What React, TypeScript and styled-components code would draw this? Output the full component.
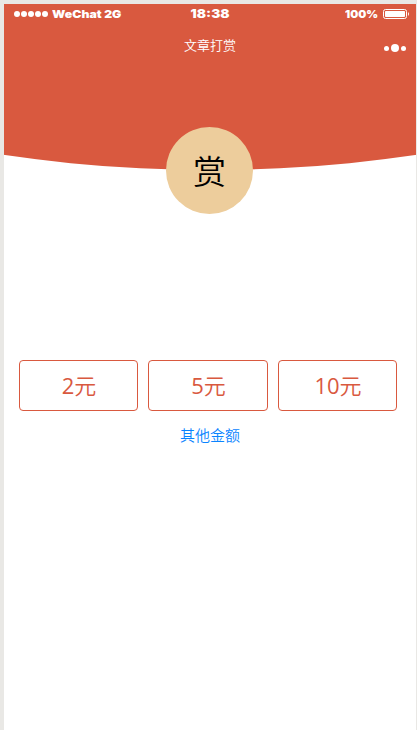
import React from "react";
import styled, { createGlobalStyle } from "styled-components";

const RED = "#d9593f";

const GlobalStyle = createGlobalStyle`
  * { box-sizing: border-box; }
  html, body, #root { height: 100%; }
  body {
    margin: 0;
    overflow: hidden;
    background: #e9e8e5;
    font-family: "Noto Sans CJK SC", sans-serif;
  }
`;

const Frame = styled.div`
  height: 100%;
  padding: 4px 1px 0 4px;
`;

const Phone = styled.main`
  height: 100%;
  background: #fff;
`;

const Hero = styled.header`
  height: 166px;
  background: ${RED};
  color: #fff;
  clip-path: circle(1422px at 206px -1256px);
`;

const StatusBar = styled.div`
  display: grid;
  grid-template-columns: 1fr auto 1fr;
  align-items: center;
  height: 20px;
  padding: 0 6px 0 10px;
`;

const StatusGroup = styled.div<{ $end?: boolean }>`
  display: flex;
  align-items: center;
  justify-content: ${(p) => (p.$end ? "flex-end" : "flex-start")};
  gap: ${(p) => (p.$end ? 5 : 4)}px;
`;

const StatusText = styled.span<{ $size?: number; $stretch?: number; $origin?: string }>`
  font: 900 ${(p) => p.$size ?? 11}px/20px Inter, sans-serif;
  white-space: nowrap;
  transform: scaleX(${(p) => p.$stretch ?? 1});
  transform-origin: ${(p) => p.$origin ?? "left"} center;
`;

const Clock = styled(StatusText)`
  margin-right: 3px;
`;

const Signal = styled.div`
  display: flex;
  gap: 1px;
`;

const SignalDot = styled.i`
  width: 6px;
  height: 6px;
  border-radius: 50%;
  background: #fff;
`;

const TitleBar = styled.div`
  display: grid;
  grid-template-columns: 1fr auto 1fr;
  align-items: center;
  height: 43px;
`;

const Title = styled.h1`
  grid-column: 2;
  margin: 0 0 2px;
  font-size: 13px;
  font-weight: 350;
  line-height: 20px;
`;

const MenuDots = styled.div`
  display: flex;
  align-items: center;
  justify-content: flex-end;
  gap: 2px;
  padding: 5px 10px 0 0;
`;

const MenuDot = styled.i<{ $size: number }>`
  width: ${(p) => p.$size}px;
  height: ${(p) => p.$size}px;
  border-radius: 50%;
  background: #fff;
`;

const Seal = styled.div`
  position: relative;
  display: flex;
  align-items: center;
  justify-content: center;
  width: 87px;
  height: 87px;
  margin: -43px 0 0 162px;
  padding-bottom: 1px;
  border-radius: 50%;
  background: #edcd9c;
  color: #000;
  font-size: 33px;
  font-weight: 350;
  line-height: 48px;
`;

const Amounts = styled.section`
  display: grid;
  grid-template-columns: 119px 120px 119px;
  gap: 10px;
  margin: 146px 0 0 15px;
`;

const AmountButton = styled.button`
  height: 51px;
  padding: 0 0 3px 1px;
  border: 1px solid ${RED};
  border-radius: 4px;
  background: #fff;
  color: ${RED};
  font: 400 22px/32px "Open Sans", "Noto Sans CJK SC", sans-serif;
`;

const Unit = styled.span`
  font-family: "Noto Sans CJK SC", sans-serif;
  font-weight: 350;
`;

const OtherAmount = styled.a`
  display: block;
  margin: 12px 0 0;
  color: #0a84ff;
  font-size: 15px;
  font-weight: 350;
  line-height: 24px;
  text-align: center;
`;

const Battery = () => (
  <svg width="27" height="10" viewBox="0 0 27 10">
    <rect x="0.5" y="0.5" width="23" height="9" rx="2" fill="none" stroke="#fff" />
    <rect x="2" y="2" width="20" height="6" rx="0.8" fill="#fff" />
    <path d="M25 3Q27 5 25 7Z" fill="#fff" />
  </svg>
);

export default function App() {
  return (
    <Frame>
      <GlobalStyle />
      <Phone>
        <Hero>
          <StatusBar>
            <StatusGroup>
              <Signal>
                {[0, 1, 2, 3, 4].map((n) => (
                  <SignalDot key={n} />
                ))}
              </Signal>
              <StatusText $stretch={1.12}>WeChat 2G</StatusText>
            </StatusGroup>
            <Clock $size={12} $stretch={1.14} $origin="center">18:38</Clock>
            <StatusGroup $end>
              <StatusText $stretch={1.03} $origin="right">100%</StatusText>
              <Battery />
            </StatusGroup>
          </StatusBar>
          <TitleBar>
            <Title>文章打赏</Title>
            <MenuDots>
              <MenuDot $size={5} />
              <MenuDot $size={8} />
              <MenuDot $size={5} />
            </MenuDots>
          </TitleBar>
        </Hero>
        <Seal>赏</Seal>
        <Amounts>
          {[2, 5, 10].map((amount) => (
            <AmountButton key={amount}>
              {amount}
              <Unit>元</Unit>
            </AmountButton>
          ))}
        </Amounts>
        <OtherAmount>其他金额</OtherAmount>
      </Phone>
    </Frame>
  );
}
